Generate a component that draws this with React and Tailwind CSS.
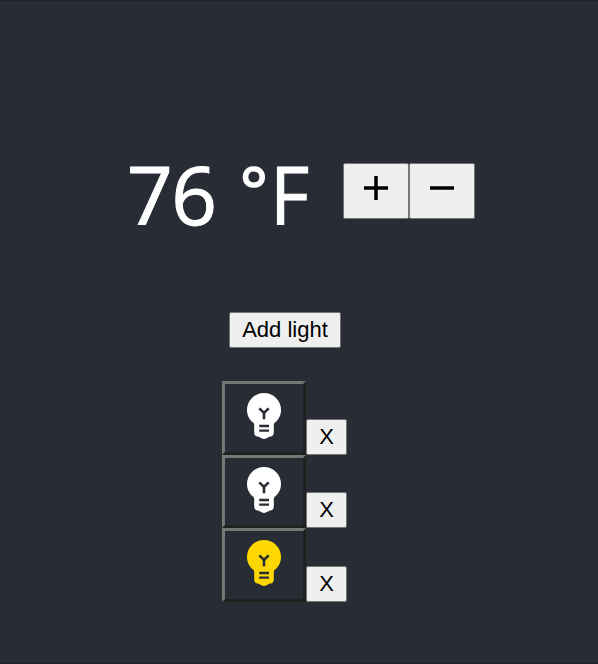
import React from "react";

function Bulb({ on }) {
  return (
    <svg width="34" height="46" viewBox="0 0 34 46" className={on ? "block text-[#ffd700]" : "block text-white"}>
      <path
        fill="currentColor"
        d="M17 0A17 17 0 0 0 0 17C0 22.600 2.500 26.600 6 29.600Q7.200 30.600 7.200 32V39.500C7.200 41.800 8.300 43.300 10.800 43.600C12.800 44 14 46 17 46S21.200 44 23.200 43.600C25.700 43.300 26.800 41.800 26.800 39.500V32Q26.800 30.600 28 29.600C31.500 26.600 34 22.600 34 17A17 17 0 0 0 17 0Z"
      />
      <path d="M12.300 15.300L17 20L21.700 15.300M17 19.200V26.300" fill="none" stroke="#282c34" strokeWidth="2.600" />
      <path d="M12.200 33H22M12.200 37.700H22" stroke="#282c34" strokeWidth="2.300" />
    </svg>
  );
}

function Light({ on, height }) {
  return (
    <div className={`flex items-end ${height}`}>
      <button className="flex h-full w-[84px] items-start justify-center border-[3px] border-t-[#767676] border-r-[#212121] border-b-[#212121] border-l-[#767676] pt-[9px]">
        <Bulb on={on} />
      </button>
      <button className="h-9 w-[41px] rounded-[2px] border border-[#767676] bg-[#efefef] text-[22px] leading-[34px]">X</button>
    </div>
  );
}

export default function App() {
  return (
    <main className="flex h-[664px] w-[598px] flex-col overflow-hidden border-y border-[#20242d] bg-[#282c34] font-['Liberation_Sans',Arial,sans-serif] text-black">
      <section className="mt-[162px] flex h-[66px] items-start pl-[127px]">
        <div className="w-[216px] whitespace-pre font-['Open_Sans',sans-serif] text-[80px] leading-[62px] tracking-[-1.5px] text-white [-webkit-text-stroke:1px_white]">
          {"76 "}
          <span className="mr-[1.5px] ml-[5px] align-[10px] text-[66px] leading-[0px] tracking-normal [-webkit-text-stroke:1.6px_white]">°</span>
          <span className="inline-block origin-left scale-x-95">F</span>
        </div>
        <button className="flex h-[56px] w-[66px] justify-center rounded-[2px] border border-[#767676] bg-[#efefef] pt-3">
          <svg width="24" height="24" viewBox="0 0 24 24" fill="none" stroke="black" strokeWidth="3.500">
            <path d="M0 12H24M12 0V24" />
          </svg>
        </button>
        <button className="flex h-[56px] w-[66px] justify-center rounded-[2px] border border-[#767676] bg-[#efefef] pt-3">
          <svg width="24" height="24" viewBox="0 0 24 24" fill="none" stroke="black" strokeWidth="3.500">
            <path d="M0 12H24" />
          </svg>
        </button>
      </section>
      <button className="mt-[83px] ml-[229px] h-9 w-28 shrink-0 rounded-[2px] border border-[#767676] bg-[#efefef] text-[22px] leading-[34px]">Add light</button>
      <section className="mt-[33px] ml-[222px]">
        <Light height="h-[74px]" />
        <Light height="h-[73px]" />
        <Light height="h-[74px]" on />
      </section>
    </main>
  );
}
